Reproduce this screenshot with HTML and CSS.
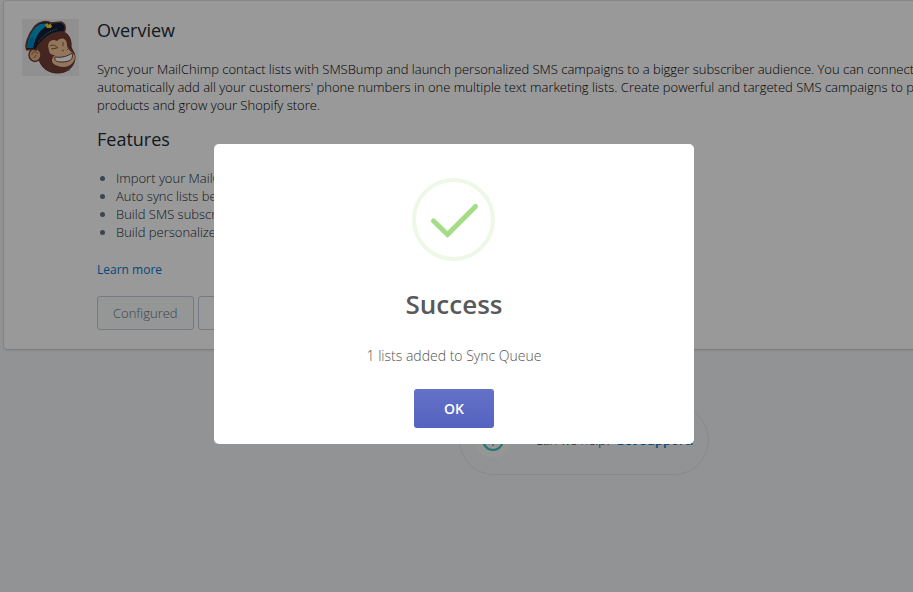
FILE: index.html
```html
<!DOCTYPE html>
<html lang="en">
<head>
  <meta charset="UTF-8" />
  <meta name="viewport" content="width=device-width, initial-scale=1.0"/>
  <title>MailChimp integration</title>
  <link rel="stylesheet" href="styles.css">
</head>
<body>
  <main class="page">
    <section class="card">
      <div class="app-logo">
        <svg viewBox="0 0 57 57" width="57" height="57" role="img" aria-label="MailChimp">
          <!-- head -->
          <path d="M16 30C15 46 24 54 36 54C46 54 53 47 53 38C53 34 50 31 49 28C50 17 43 10 33 13C23 16 17 22 16 30Z" fill="#733f36" stroke="#5a2d28" stroke-width="1"/>
          <!-- ear -->
          <ellipse cx="13" cy="36" rx="6" ry="6.5" fill="#e6b688" stroke="#733f36" stroke-width="1.5"/>
          <path d="M10 36C10 32 15 32 16 35M12 39L14 36" fill="none" stroke="#94583c" stroke-width="1"/>
          <!-- face -->
          <path d="M27 31C24 23 30 19 35 22C40 17 45 20 45 26C45 31 51 33 53 37C53 46 44 50 36 47C28 45 29 39 33 36C29 36 27 34 27 31Z" fill="#f2c89a"/>
          <path d="M28 27C31 25 34 27 36 29M29 30L35 29M41 23V27" fill="none" stroke="#8a5240" stroke-width="1"/>
          <path d="M40 31L42 32M45 30L46 31" stroke="#94583c" stroke-width="1"/>
          <!-- grin -->
          <path d="M33 38C40 39 46 37 50 34C52 40 48 43 40 43C35 43 32 42 33 38Z" fill="#ffffff" stroke="#733f36" stroke-width="1"/>
          <!-- cap -->
          <path d="M5 31C2 27 6 16 13 7C17 3 24 1 29 4L39 3C44 5 44 10 42 13C31 12 22 19 16 27L14 31C10 29 8 31 5 31Z" fill="#111f35" stroke="#733f36" stroke-width="1.5"/>
          <path d="M5 29C5 21 10 11 15 7C19 4 24 4 27 6C19 9 13 17 11 29Z" fill="#00a1d3"/>
          <path d="M5 29C6 23 8 19 10 17L13 21L11 29Z" fill="#0087bd"/>
          <path d="M16 23C21 17 27 12 35 10" fill="none" stroke="#6f8794" stroke-width="1" stroke-dasharray="1 1"/>
          <path d="M23 6L25 4L27 6L28 4L30 7L29 9L25 9Z" fill="#ffd21e"/>
          <path d="M46 51H48" stroke="#777777" stroke-width="1"/>
        </svg>
      </div>
      <div class="card-body">
        <h2>Overview</h2>
        <p class="intro">Sync your MailChimp contact lists with SMSBump and launch personalized SMS campaigns to a bigger subscriber audience. You can connect<br>
          automatically add all your customers' phone numbers in one multiple text marketing lists. Create powerful and targeted SMS campaigns to personalize<br>
          products and grow your Shopify store.</p>
        <h2>Features</h2>
        <ul class="features">
          <li>Import your MailChimp lists</li>
          <li>Auto sync lists between apps</li>
          <li>Build SMS subscribers</li>
          <li>Build personalized campaigns</li>
        </ul>
        <a class="learn-more" href="#">Learn more</a>
        <div class="actions">
          <button class="btn" type="button" disabled>Configured</button>
          <button class="btn btn-sync" type="button">Sync</button>
        </div>
      </div>
    </section>

    <footer class="help">
      <span class="help-icon">
        <svg viewBox="0 0 24 24" width="24" height="24" aria-hidden="true">
          <circle cx="12" cy="12" r="10" fill="none" stroke="#47c1bf" stroke-width="2"/>
          <path d="M9 9C9 5 15 5 15 9C15 11 12 11 12 14" fill="none" stroke="#47c1bf" stroke-width="2"/>
          <circle cx="12" cy="17" r="1" fill="#47c1bf"/>
        </svg>
      </span>
      <p>Can we help? <a href="#">Get support.</a></p>
    </footer>
  </main>

  <div class="overlay">
    <div class="modal" role="dialog" aria-modal="true" aria-labelledby="modal-title">
      <svg class="modal-icon" viewBox="0 0 84 84" width="84" height="84" aria-hidden="true">
        <circle cx="41.5" cy="41.5" r="39.5" fill="none" stroke="#edf8e7" stroke-width="4"/>
        <path d="M21.5 43L35.5 56.5L63.5 28.5" fill="none" stroke="#a5dc86" stroke-width="5" stroke-linecap="round"/>
      </svg>
      <h1 class="modal-title" id="modal-title">Success</h1>
      <p class="modal-text">1 lists added to Sync Queue</p>
      <button class="modal-ok" type="button">OK</button>
    </div>
  </div>
</body>
</html>
```
FILE: styles.css
```css
* { box-sizing: border-box; }

body {
  margin: 0;
  background: #f4f6f8;
  font-family: 'Segoe UI', 'Open Sans', sans-serif;
  font-size: 13px;
  font-weight: 300;
  line-height: 18px;
  color: #212b36;
  overflow: hidden;
  min-height: 100vh;
}

.page {
  min-width: 1168px;
  padding: 1px 4px;
}

.card {
  display: flex;
  gap: 18px;
  padding: 18px 18px 19px;
  background: #fff;
  border-radius: 3px;
  box-shadow: 0 0 0 1px rgba(63, 63, 68, 0.08), 0 1px 3px rgba(63, 63, 68, 0.2);
}

.app-logo {
  flex: none;
  width: 57px;
  height: 57px;
  background: #f0f0f0;
}

.app-logo svg { display: block; }

.card-body { color: #000; }

h2 {
  margin: 0;
  font-size: 18px;
  line-height: 22px;
  font-weight: 400;
  color: #212b36;
}

.intro {
  margin: 19px 0 14px;
  white-space: nowrap;
}

.features {
  margin: 19px 0;
  padding-left: 19px;
  color: #212b36;
}

.features li::marker { color: #637381; }

.learn-more,
.help a {
  color: #007ace;
  text-decoration: none;
}

.learn-more {
  font-size: 12px;
  font-weight: 400;
}

.actions {
  display: flex;
  gap: 4px;
  margin-top: 17px;
}

.btn {
  height: 34px;
  padding: 0 15px;
  font-family: inherit;
  font-size: 13px;
  font-weight: 300;
  color: #212b36;
  background: #fff;
  border: 1px solid #c4cdd5;
  border-radius: 3px;
}

.btn:disabled {
  color: #637381;
  background: #f9fafb;
}

.btn-sync { padding: 0 24px; }

.help {
  display: flex;
  align-items: center;
  gap: 24px;
  width: fit-content;
  margin: 56px auto 0;
  padding: 16px 15px;
  border: 1px solid #dfe3e8;
  border-radius: 36px;
}

.help-icon {
  display: flex;
  align-items: center;
  justify-content: center;
  width: 36px;
  height: 36px;
  background: #f9fafb;
  border-radius: 50%;
}

.help p { margin: 0; }

.help a { font-weight: 600; }

.overlay {
  position: fixed;
  inset: 0;
  display: flex;
  align-items: center;
  justify-content: center;
  padding: 0 5px 4px 0;
  background: rgba(0, 0, 0, 0.4);
}

.modal {
  display: flex;
  flex-direction: column;
  align-items: center;
  width: 480px;
  max-width: 100%;
  padding: 34px 16px 16px;
  background: #fff;
  border-radius: 5px;
}

.modal-title {
  margin: 24px 0;
  font-size: 26px;
  line-height: 36px;
  font-weight: 600;
  color: #595959;
}

.modal-text {
  margin: 0 0 23px;
  font-size: 14px;
  line-height: 20px;
  font-weight: 300;
  color: #545454;
}

.modal-ok {
  height: 39px;
  padding: 0 30px;
  font-family: inherit;
  font-size: 14px;
  font-weight: 600;
  color: #fff;
  background: linear-gradient(180deg, #6371c7, #5563c1);
  border: 0;
  border-radius: 3px;
}
```
